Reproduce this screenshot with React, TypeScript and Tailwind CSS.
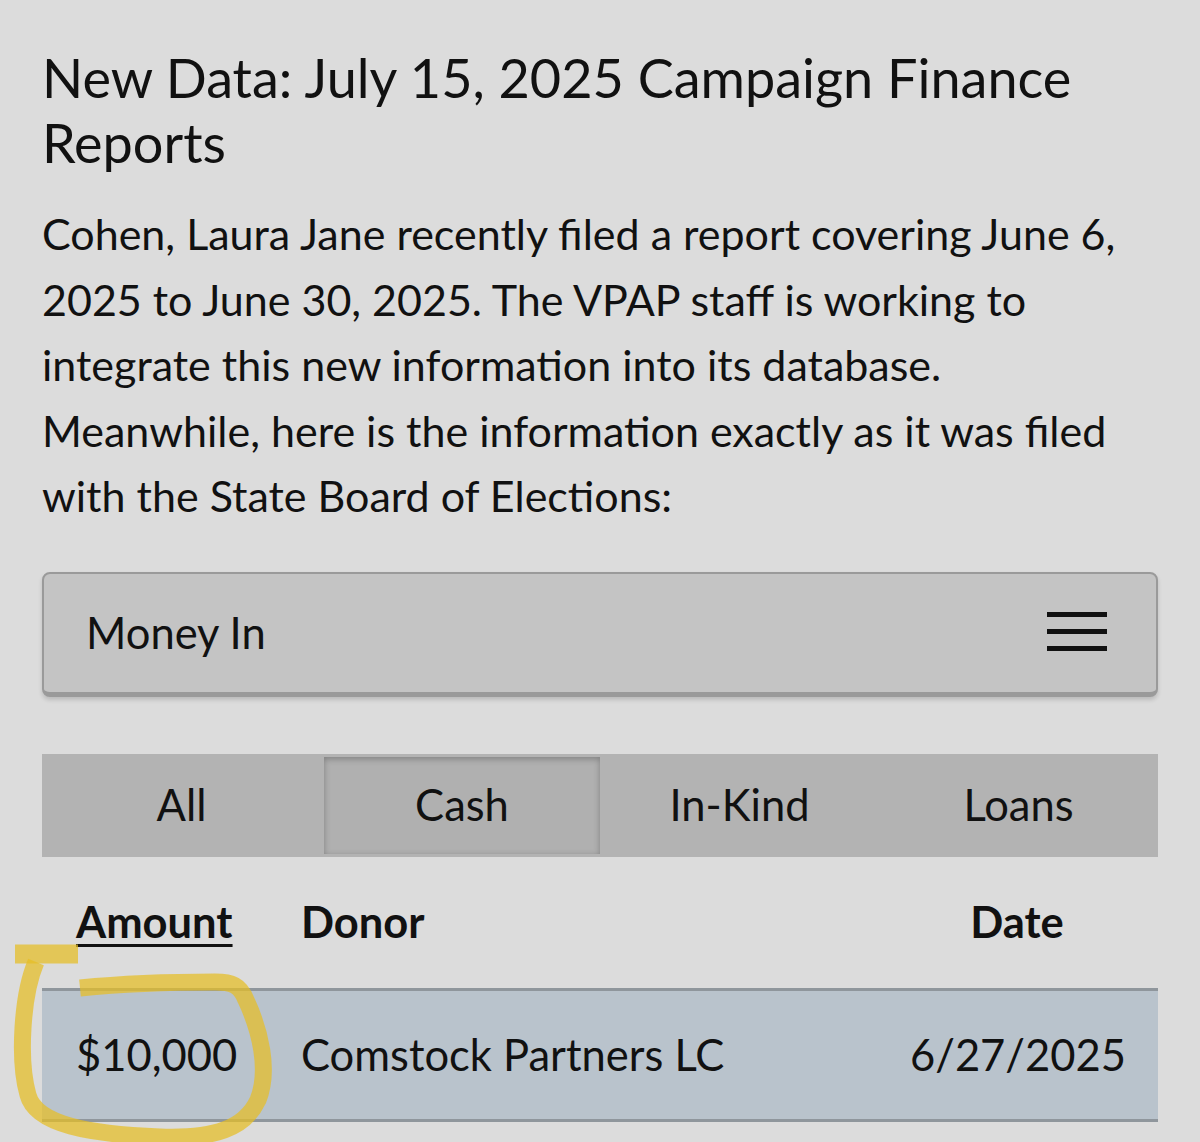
import React from 'react'

const font = { fontFamily: 'Lato, "Noto Sans", sans-serif' }

function Hamburger() {
  return (
    <svg width="62" height="44" viewBox="0 0 62 44" className="shrink-0">
      <rect x="1" y="1" width="60" height="5" fill="#111" />
      <rect x="1" y="18" width="60" height="5" fill="#111" />
      <rect x="1" y="35" width="60" height="5" fill="#111" />
    </svg>
  )
}

// yellow marker scribble drawn over the screenshot
function Highlight() {
  return (
    <svg className="pointer-events-none absolute left-0 top-0" width="300" height="1142" viewBox="0 0 300 1142">
      <g fill="none" stroke="rgba(230,190,36,0.72)" strokeLinejoin="round">
        <path d="M15 954 H78" strokeWidth="19" />
        <path
          d="M36 962 C22 995 18 1060 28 1095 C36 1125 90 1134 160 1137 C215 1139 245 1128 258 1100 C270 1070 260 1030 246 1000 C240 985 232 982 215 982 C170 982 120 984 80 988"
          strokeWidth="17"
          strokeLinecap="butt"
        />
      </g>
    </svg>
  )
}

export default function App() {
  const tabs = ['All', 'Cash', 'In-Kind', 'Loans']
  return (
    <div className="relative min-h-[1142px] w-[1200px] overflow-hidden bg-[#dcdcdc] text-[#111]" style={font}>
      <div className="px-[42px] pt-[45px]">
        <h1 className="text-[54px] leading-[65px] font-normal">
          New Data: July 15, 2025 Campaign Finance Reports
        </h1>
        <p className="mt-[26px] text-[43px] leading-[65.5px]">
          Cohen, Laura Jane recently filed a report covering June 6, 2025 to June 30, 2025. The VPAP staff is working to integrate this new information into its database. Meanwhile, here is the information exactly as it was filed with the State Board of Elections:
        </p>

        <div className="mt-[43px] flex h-[125px] items-center justify-between rounded-[8px] border-2 border-b-[5px] border-[#9a9a9a] bg-[#c4c4c4] pl-[42px] pr-[48px] shadow-[0_3px_4px_rgba(0,0,0,0.15)]">
          <span className="text-[43.5px]">Money In</span>
          <Hamburger />
        </div>

        <div className="mt-[57px] grid h-[103px] grid-cols-4 bg-[#b3b3b3] text-[43.5px]">
          {tabs.map(t => (
            <div
              key={t}
              className={
                t === 'Cash'
                  ? 'my-[3px] ml-[3px] flex items-center justify-center bg-[#b0b0b0] shadow-[inset_0_2px_6px_rgba(0,0,0,0.28)]'
                  : 'flex items-center justify-center'
              }
            >
              {t}
            </div>
          ))}
        </div>

        <div className="grid h-[131px] grid-cols-[225px_1fr_214px] items-center px-[34px] text-[43.5px] font-bold">
          <span className="justify-self-start underline decoration-[3px] underline-offset-[6px]">Amount</span>
          <span>Donor</span>
          <span className="text-center">Date</span>
        </div>

        <div className="grid h-[134px] grid-cols-[225px_1fr_214px] items-center border-y-[3px] border-[#8f969c] bg-[#b9c3cc] px-[34px] text-[43.5px]">
          <span>$10,000</span>
          <span>Comstock Partners LC</span>
          <span className="text-right">6/27/2025</span>
        </div>
      </div>
      <Highlight />
    </div>
  )
}
